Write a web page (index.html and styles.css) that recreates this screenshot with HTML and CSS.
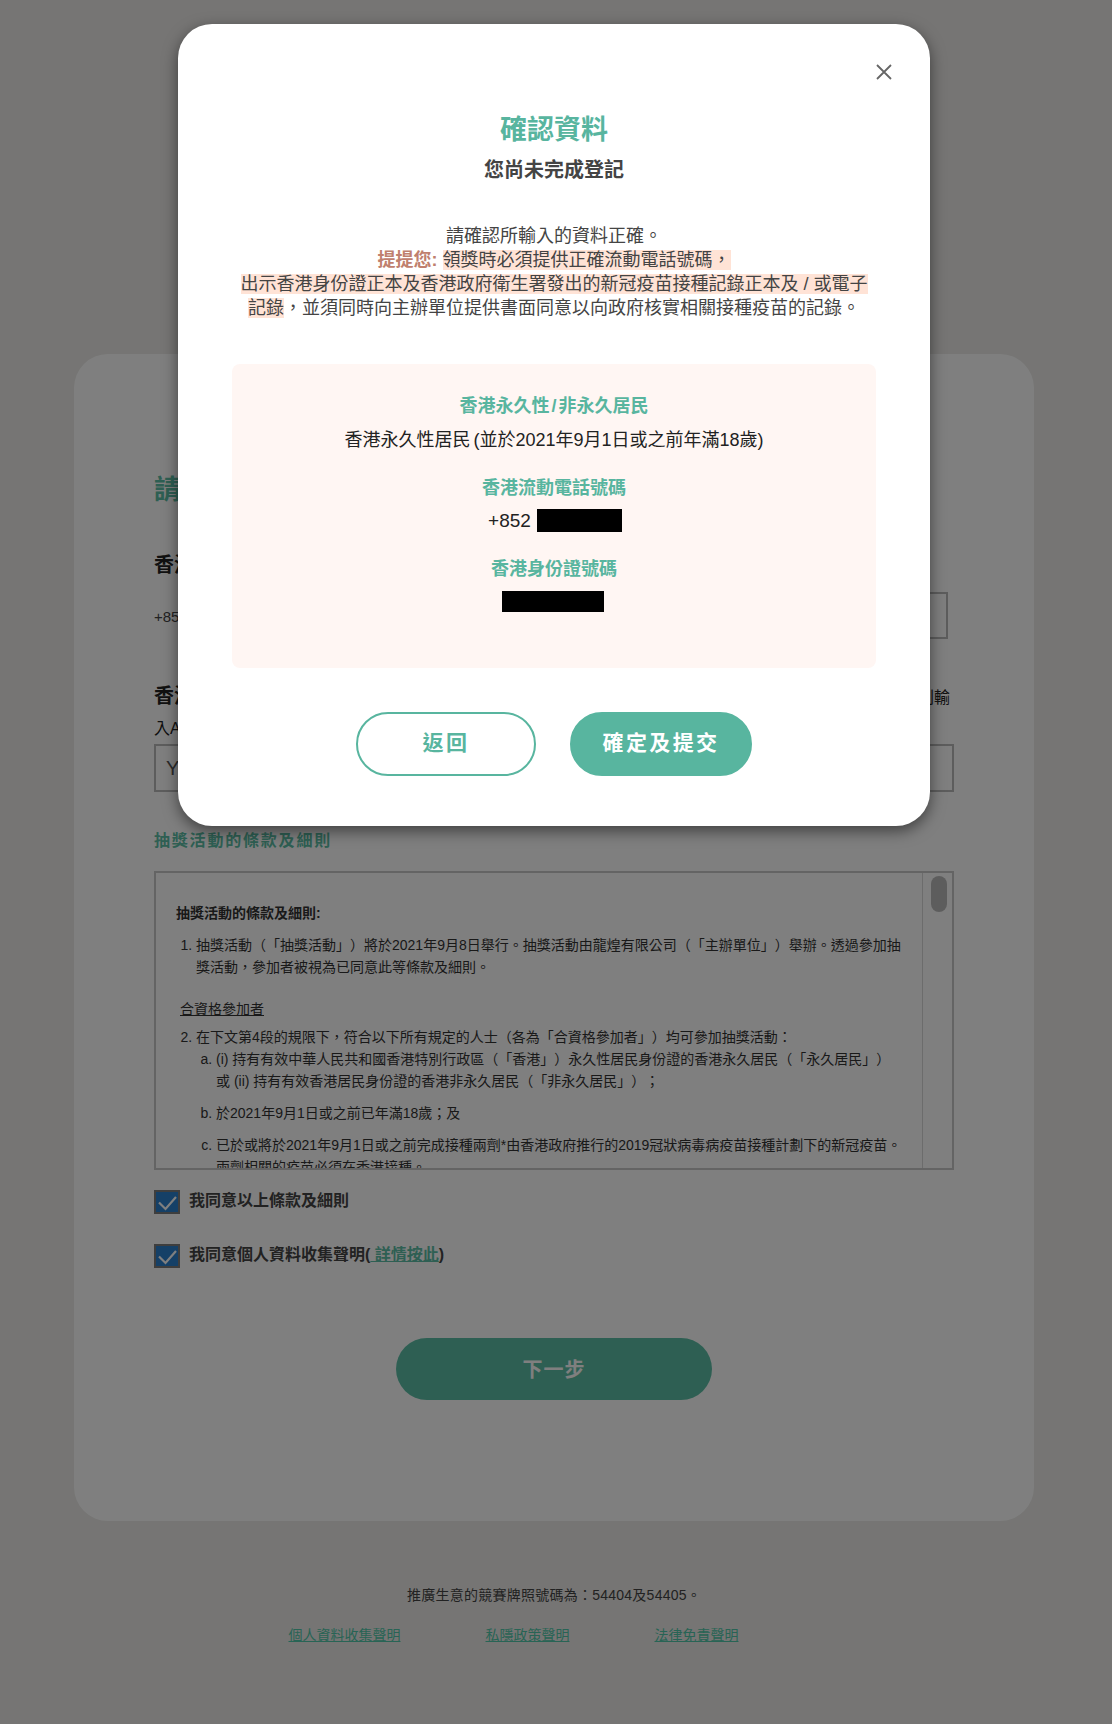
FILE: index.html
```html
<!DOCTYPE html>
<html lang="zh-Hant">
<head>
<meta charset="utf-8">
<title>確認資料</title>
<link rel="stylesheet" href="styles.css">
</head>
<body>
<main class="page">
  <section class="card">
    <h1 class="heading">請輸入您的登記資料</h1>
    <h2 class="label">香港流動電話號碼</h2>
    <div class="phone-row">
      <span class="prefix">+852</span>
      <div class="input"></div>
    </div>
    <div class="label-row">
      <h2 class="label">香港身份證號碼</h2>
      <span class="hint">如身份證號碼為A123456(7)，則輸</span>
    </div>
    <p class="hint-line">入A123456</p>
    <div class="input input-full">Y123456</div>
    <h3 class="terms-title">抽獎活動的條款及細則</h3>
    <div class="terms">
      <div class="terms-scroll">
        <p class="terms-head">抽獎活動的條款及細則:</p>
        <ol class="terms-list">
          <li>抽獎活動（「抽獎活動」）將於2021年9月8日舉行。抽獎活動由龍煌有限公司（「主辦單位」）舉辦。透過參加抽<br>獎活動，參加者被視為已同意此等條款及細則。</li>
        </ol>
        <p class="terms-sub"><u>合資格參加者</u></p>
        <ol class="terms-list" start="2">
          <li>在下文第4段的規限下，符合以下所有規定的人士（各為「合資格參加者」）均可參加抽獎活動：
            <ol class="terms-alpha" type="a">
              <li>(i) 持有有效中華人民共和國香港特別行政區（「香港」）永久性居民身份證的香港永久居民（「永久居民」）<br>或 (ii) 持有有效香港居民身份證的香港非永久居民（「非永久居民」）；</li>
              <li>於2021年9月1日或之前已年滿18歲；及</li>
              <li>已於或將於2021年9月1日或之前完成接種兩劑*由香港政府推行的2019冠狀病毒病疫苗接種計劃下的新冠疫苗。<br>兩劑相關的疫苗必須在香港接種。</li>
            </ol>
          </li>
        </ol>
      </div>
      <div class="scroll-track"><div class="scroll-thumb"></div></div>
    </div>
    <div class="check-row">
      <span class="check"><svg viewBox="0 0 22 20" width="22" height="20"><path d="M3 10.5 L9.5 17 L20 5" fill="none" stroke="#fff" stroke-width="2.2"/></svg></span>
      <span class="check-text">我同意以上條款及細則</span>
    </div>
    <div class="check-row check-row-2">
      <span class="check"><svg viewBox="0 0 22 20" width="22" height="20"><path d="M3 10.5 L9.5 17 L20 5" fill="none" stroke="#fff" stroke-width="2.2"/></svg></span>
      <span class="check-text">我同意個人資料收集聲明(<a class="check-link" href="#">&nbsp;詳情按此</a>)</span>
    </div>
    <button class="next" type="button">下一步</button>
  </section>
  <footer class="footer">
    <p class="licence">推廣生意的競賽牌照號碼為：54404及54405。</p>
    <nav class="foot-links">
      <a href="#">個人資料收集聲明</a>
      <a href="#">私隱政策聲明</a>
      <a href="#">法律免責聲明</a>
    </nav>
  </footer>
</main>

<div class="overlay">
  <div class="modal">
    <button class="close" type="button" aria-label="關閉">
      <svg viewBox="0 0 16 16" width="16" height="16"><path d="M1 1 L15 15 M15 1 L1 15" fill="none" stroke="#666" stroke-width="1.8"/></svg>
    </button>
    <h2 class="modal-title">確認資料</h2>
    <p class="modal-sub">您尚未完成登記</p>
    <p class="modal-text">請確認所輸入的資料正確。<br><b class="tip">提提您:</b> <span class="mark">領獎時必須提供正確流動電話號碼，</span><br><span class="mark">出示香港身份證正本及香港政府衛生署發出的新冠疫苗接種記錄正本及 / 或電子</span><br><span class="mark">記錄</span>，並須同時向主辦單位提供書面同意以向政府核實相關接種疫苗的記錄。</p>
    <div class="summary">
      <h3 class="sum-title">香港永久性<span class="slash">/</span>非永久居民</h3>
      <p class="sum-value">香港永久性居民 (並於2021年9月1日或之前年滿18歲)</p>
      <h3 class="sum-title sum-gap">香港流動電話號碼</h3>
      <div class="sum-phone"><span class="sum-prefix">+852</span><span class="redact redact-phone"></span></div>
      <h3 class="sum-title sum-gap">香港身份證號碼</h3>
      <div class="sum-id"><span class="redact redact-id"></span></div>
    </div>
    <div class="actions">
      <button class="btn btn-back" type="button">返回</button>
      <button class="btn btn-ok" type="button">確定及提交</button>
    </div>
  </div>
</div>
</body>
</html>
```

FILE: styles.css
```css
* { box-sizing: border-box; }
html, body { margin: 0; padding: 0; }
body {
  position: relative;
  width: 1112px;
  height: 1724px;
  overflow: hidden;
  background: #ecebe8;
  color: #333;
  font-family: "Liberation Sans", "Noto Sans CJK TC", sans-serif;
  text-spacing-trim: space-all;
}
h1, h2, h3, p { margin: 0; }
a { color: #50c8aa; }

.page { width: 1108px; padding-top: 354px; }
.card {
  width: 960px;
  height: 1167px;
  margin: 0 auto;
  padding: 118px 80px 0;
  background: #fff;
  border-radius: 34px;
}
.heading { font-size: 27px; line-height: 36px; color: #5cbfa6; font-weight: 700; }
.label { font-size: 20px; line-height: 28px; font-weight: 700; color: #222; }
.heading + .label { margin-top: 43px; }
.phone-row { display: flex; align-items: center; gap: 20px; margin-top: 13px; padding-right: 6px; }
.prefix { padding-top: 2px; font-size: 15px; color: #444; }
.input { flex: 1; height: 47px; border: 2px solid #bbb; }
.label-row { display: flex; justify-content: space-between; align-items: center; margin-top: 43px; padding-right: 4px; }
.hint { font-size: 16px; color: #222; }
.hint-line { margin-top: 7px; font-size: 16px; line-height: 24px; color: #222; }
.input-full { height: 48px; margin-top: 3px; padding: 0 10px; font-size: 20px; line-height: 44px; color: #555; }
.terms-title { margin-top: 37px; font-size: 16px; line-height: 24px; letter-spacing: 1.8px; font-weight: 700; color: #5cbfa6; }
.terms {
  position: relative;
  height: 299px;
  margin-top: 18px;
  border: 2px solid #c8c8c8;
  overflow: hidden;
}
.terms-scroll { padding: 29px 40px 0 20px; font-size: 14px; line-height: 22px; color: #333; }
.terms-head { font-weight: 700; }
.terms-list { margin: 10px 0 0; padding-left: 20px; }
.terms-sub { margin-top: 20px; padding-left: 4px; }
.terms-sub + .terms-list { margin-top: 6px; }
.terms-alpha { margin: 0; padding-left: 20px; }
.terms-alpha li { margin-bottom: 10px; }
.scroll-track {
  position: absolute;
  top: 0; right: 0; bottom: 0;
  width: 30px;
  border-left: 1px solid #d8d8d8;
  background: #fff;
}
.scroll-thumb { width: 16px; height: 36px; margin: 3px 0 0 8px; border-radius: 8px; background: #bbb; }
.check-row { display: flex; align-items: flex-start; gap: 9px; margin-top: 20px; }
.check-row-2 { margin-top: 30px; }
.check {
  display: flex;
  align-items: flex-end;
  justify-content: center;
  width: 26px;
  height: 24px;
  background: #2a80cf;
  border: 2px solid #7c7c7c;
}
.check-text { font-size: 16px; line-height: 22px; font-weight: 700; color: #444; }
.check-link { color: #5cbfa6; }
.next {
  display: block;
  width: 316px;
  height: 62px;
  margin: 70px auto 0;
  padding: 2px 0 0;
  border: 0;
  border-radius: 31px;
  background: #5cbfa6;
  color: #fff;
  font: 700 20px/1 "Liberation Sans", "Noto Sans CJK TC", sans-serif;
  letter-spacing: 1px;
}
.footer { text-align: center; }
.licence { margin-top: 64px; font-size: 14px; line-height: 20px; letter-spacing: 0.25px; color: #444; }
.foot-links { display: flex; justify-content: center; margin-top: 20px; padding-left: 4px; font-size: 14px; line-height: 20px; }
.foot-links a { margin-right: 85px; }

.overlay {
  position: absolute;
  inset: 0;
  padding: 24px 0 0 178px;
  background: rgba(0, 0, 0, 0.5);
}
.modal {
  position: relative;
  width: 752px;
  height: 802px;
  padding: 88px 54px 0;
  background: #fff;
  border-radius: 34px;
  box-shadow: 0 5px 15px rgba(0, 0, 0, 0.5);
  text-align: center;
}
.close {
  position: absolute;
  top: 40px;
  right: 38px;
  width: 16px;
  height: 16px;
  padding: 0;
  border: 0;
  background: none;
  line-height: 0;
}
.modal-title { font-size: 27px; line-height: 36px; font-weight: 700; color: #58b59f; }
.modal-sub { margin-top: 8px; font-size: 20px; line-height: 28px; font-weight: 700; color: #444; }
.modal-text { margin-top: 40px; font-size: 18px; line-height: 24px; color: #444; }
.tip { color: #c0806e; }
.mark { background: #ffe3d6; }
.summary {
  height: 304px;
  margin-top: 44px;
  padding-top: 30px;
  background: #fff6f3;
  border-radius: 8px;
}
.sum-title { font-size: 18px; line-height: 24px; font-weight: 700; color: #58b59f; }
.slash { margin: 0 2px; }
.sum-gap { margin-top: 24px; }
.sum-value { margin-top: 10px; font-size: 18px; line-height: 24px; word-spacing: -2px; color: #222; }
.sum-phone { display: flex; justify-content: center; align-items: center; gap: 6px; margin-top: 7px; padding-left: 2px; font-size: 18px; line-height: 24px; color: #222; }
.sum-prefix { padding-top: 2px; font-size: 19px; }
.sum-id { display: flex; justify-content: center; margin-top: 10px; padding-right: 2px; }
.redact { display: block; background: #000; }
.redact-phone { width: 85px; height: 23px; }
.redact-id { width: 102px; height: 21px; }
.actions { display: flex; justify-content: center; gap: 34px; margin-top: 44px; }
.btn {
  height: 64px;
  padding: 0 0 3px;
  border-radius: 32px;
  font: 700 21px/1 "Liberation Sans", "Noto Sans CJK TC", sans-serif;
  letter-spacing: 2.4px;
}
.btn-back { width: 180px; background: #fff; border: 2px solid #58b59f; color: #58b59f; }
.btn-ok { width: 182px; background: #58b59f; border: 2px solid #58b59f; color: #fff; }
```
